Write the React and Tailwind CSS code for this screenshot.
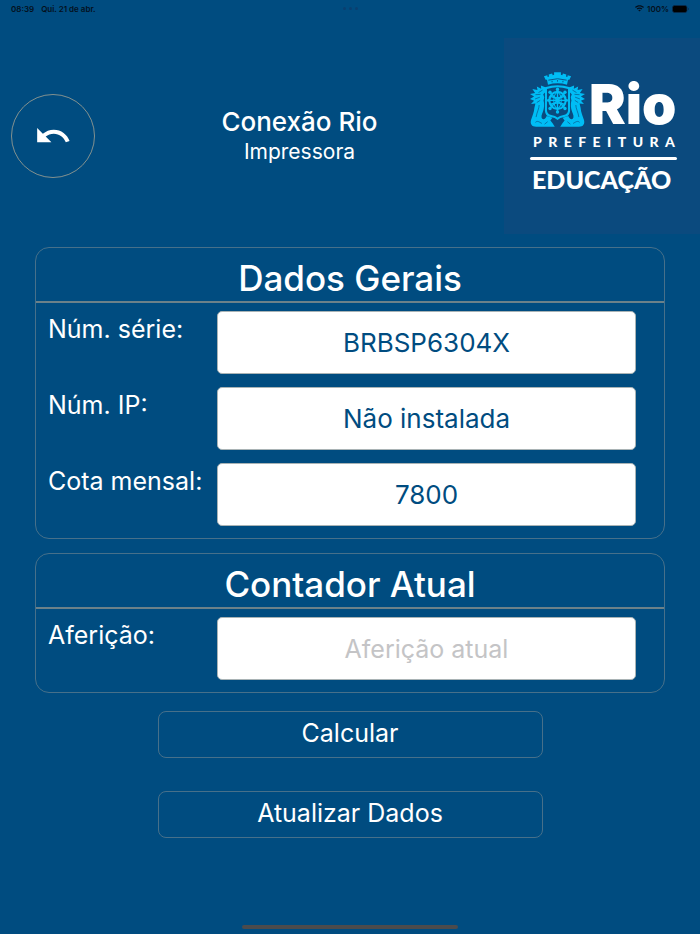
import React from 'react';
import { MdUndo } from 'react-icons/md';

const StatusBar = () => (
  <div className="grid h-[17px] grid-cols-3 items-center pl-[11px] pr-[11px] text-[8px] font-semibold text-[#04101c]">
    <div className="flex gap-[7px]">
      <span>08:39</span>
      <span>Qui. 21 de abr.</span>
    </div>
    <div className="flex justify-center gap-[3px]">
      <span className="size-[3px] rounded-full bg-[#0a3f70]" />
      <span className="size-[3px] rounded-full bg-[#0a3f70]" />
      <span className="size-[3px] rounded-full bg-[#0a3f70]" />
    </div>
    <div className="flex items-center justify-end gap-[3px]">
      <svg viewBox="0 0 18 13" className="h-[7px] w-[9px]" fill="currentColor">
        <path d="M9 0C5.600 0 2.500 1.300 0 3.500L1.900 5.500C3.800 3.800 6.300 2.700 9 2.700s5.200 1.100 7.100 2.800L18 3.500C15.500 1.300 12.400 0 9 0z" />
        <path d="M9 4.400c-2.200 0-4.200.8-5.700 2.300l1.900 2C6.200 7.700 7.500 7.100 9 7.100s2.800.6 3.800 1.600l1.900-2C13.200 5.200 11.200 4.400 9 4.400z" />
        <path d="M9 8.800c-1 0-1.900.4-2.600 1.100L9 12.700l2.600-2.800C10.900 9.200 10 8.800 9 8.800z" />
      </svg>
      <span>100%</span>
      <svg viewBox="0 0 17 8" className="h-[8px] w-[17px]">
        <rect x="0.500" y="0.500" width="14.500" height="7" rx="2" fill="#000" stroke="#082c4c" strokeWidth="0.800" />
        <path d="M16 2.800v2.400q.8-.4.8-1.200t-.8-1.200z" fill="#082c4c" />
      </svg>
    </div>
  </div>
);

// one half of the crest supporters, mirrored for the other side
const CrestSide = () => (
  <g>
    <path
      d="M58 60 L45 55 L46 64 L33 58 L35 68 L20 65 L28 76 L13 79 L25 86 L13 93 L25 98 L16 107 L29 106 L26 118 C25 130 20 142 16 152 C13 163 18 171 31 171 L86 171 L79 161 L73 154 L79 146 L62 141 C60 148 54 152 49 149 C45 144 47 138 51 129 C55 118 56 108 53 97 L55 88 L52 80 L58 74 Z"
      fill="#00bdf5"
    />
    <path
      d="M50 68 L38 75 M44 80 L29 81 M42 88 L28 93 M43 97 L33 103 M40 110 C40 120 33 131 31 144 M29 159 C35 153 40 158 48 162 M56 164 L65 157"
      fill="none"
      stroke="#0b4a7e"
      strokeWidth="1.800"
    />
  </g>
);

const Crest = () => (
  <svg
    viewBox="13 17 162 155"
    preserveAspectRatio="none"
    className="h-[55px] w-[55px] shrink-0"
    aria-hidden="true"
  >
    <CrestSide />
    <g transform="translate(188 0) scale(-1 1)">
      <CrestSide />
    </g>
    <path
      d="M54 29 L64 26 L65 31 L69 30 L68 24 L78 21 L80 26 L84 25 L84 18 L104 18 L104 25 L108 26 L110 21 L120 24 L119 30 L123 31 L124 26 L134 29 L129 39 L125 39 L122 53 Q94 45 66 53 L63 39 L59 39 Z"
      fill="#00bdf5"
    />
    <path
      d="M67 40 Q94 32 121 40 M78 42 V46 M94 40 V44 M110 42 V46"
      fill="none"
      stroke="#0b4a7e"
      strokeWidth="2.500"
    />
    <path d="M57 60 Q94 48 131 60 V127 Q130 142 114 144 Q101 146 94 152 Q87 146 74 144 Q58 142 57 127 Z" fill="#00bdf5" />
    <path d="M63 65 Q94 55 125 65 V126 Q124 136 112 138 Q100 140 94 145 Q88 140 76 138 Q64 136 63 126 Z" fill="#0b4a7e" />
    <path d="M83 151 L94 158 L105 151 L108 158 L94 168 L80 158 Z" fill="#0b4a7e" />
    <g fill="none" stroke="#00bdf5">
      <circle cx="94" cy="97" r="24" strokeWidth="6" />
      <ellipse cx="94" cy="97" rx="11" ry="22" strokeWidth="3" />
      <path d="M94 63 V132 M66 97 H122 M71 74 L117 120 M117 74 L71 120" strokeWidth="4" />
      <path d="M75 86 Q94 93 113 86 M75 108 Q94 101 113 108" strokeWidth="4" />
    </g>
    <g fill="#00bdf5">
      <circle cx="94" cy="66" r="5" />
      <circle cx="94" cy="130" r="5" />
      <circle cx="67" cy="97" r="4" />
      <circle cx="121" cy="97" r="4" />
      <circle cx="72" cy="74" r="5" />
      <circle cx="116" cy="74" r="5" />
      <circle cx="72" cy="120" r="5" />
      <circle cx="116" cy="120" r="5" />
      <circle cx="94" cy="97" r="7" />
    </g>
  </svg>
);

const Logo = () => (
  <div className="flex h-[196px] w-[196px] shrink-0 flex-col bg-[#0b4a7e] pl-[26px] pr-[22px] pt-[34px] font-['Lato',sans-serif] text-white">
    <div className="flex h-[62px] items-start gap-[4px]">
      <Crest />
      <span className="pt-[4px] font-['Inter',sans-serif] text-[55px] font-black leading-[56px]">Rio</span>
    </div>
    <div className="flex justify-between pl-[3px] pr-[3px] text-[14px] font-black leading-[16px]">
      {'PREFEITURA'.split('').map((letter, i) => (
        <span key={i}>{letter}</span>
      ))}
    </div>
    <div className="mt-[7px] h-[3px] w-[147px] rounded-full bg-white" />
    <div className="pl-[2px] pt-[3px] text-[25px] font-black leading-[32px]">EDUCAÇÃO</div>
  </div>
);

const Header = () => (
  <header className="mt-[21px] flex items-center pl-[11px]">
    <button
      type="button"
      aria-label="Voltar"
      className="flex size-[84px] shrink-0 items-center justify-center rounded-full border border-[#83918f]"
    >
      <MdUndo className="size-[38px]" />
    </button>
    <div className="flex-1 text-center">
      <h1 className="text-[26px] font-medium leading-[32px]">Conexão Rio</h1>
      <p className="text-[21px] leading-[28px]">Impressora</p>
    </div>
    <Logo />
  </header>
);

const Field = ({ id, label, value, placeholder }) => (
  <div className="flex items-start">
    <label htmlFor={id} className="w-[169px] shrink-0 text-[25px] leading-[36px]">
      {label}
    </label>
    <input
      id={id}
      type="text"
      defaultValue={value}
      placeholder={placeholder}
      className="h-[63px] min-w-0 flex-1 rounded-[5px] border border-[#a9b3b5] bg-white text-center text-[26px] text-[#004c80] placeholder:text-[25px] placeholder:text-[#c4c4c6]"
    />
  </div>
);

const Panel = ({ title, children }) => (
  <section className="rounded-[14px] border border-[#47708a] pb-[12px]">
    <h2 className="border-b-2 border-[#6c8189] pb-[1px] pt-[8px] text-center text-[35px] font-medium leading-[44px]">
      {title}
    </h2>
    <div className="flex flex-col gap-[13px] pl-[12px] pr-[28px] pt-[8px]">{children}</div>
  </section>
);

const ActionButton = ({ children }) => (
  <button
    type="button"
    className="h-[47px] w-[385px] rounded-[8px] border border-[#47708a] pb-[4px] text-[25px] leading-[36px]"
  >
    {children}
  </button>
);

const App = () => {
  return (
    <div className="flex min-h-screen flex-col bg-[#004c80] font-['Inter',sans-serif] text-white">
      <StatusBar />
      <Header />
      <main className="mt-[13px] flex flex-col gap-[14px] px-[35px]">
        <Panel title="Dados Gerais">
          <Field id="serie" label="Núm. série:" value="BRBSP6304X" />
          <Field id="ip" label="Núm. IP:" value="Não instalada" />
          <Field id="cota" label="Cota mensal:" value="7800" />
        </Panel>
        <Panel title="Contador Atual">
          <Field id="afericao" label="Aferição:" placeholder="Aferição atual" />
        </Panel>
        <div className="flex flex-col items-center gap-[33px] pt-[4px]">
          <ActionButton>Calcular</ActionButton>
          <ActionButton>Atualizar Dados</ActionButton>
        </div>
      </main>
      <div className="mx-auto mb-[5px] mt-auto h-[4px] w-[216px] rounded-full bg-[#4b4b4d]" />
    </div>
  );
};

export default App;
